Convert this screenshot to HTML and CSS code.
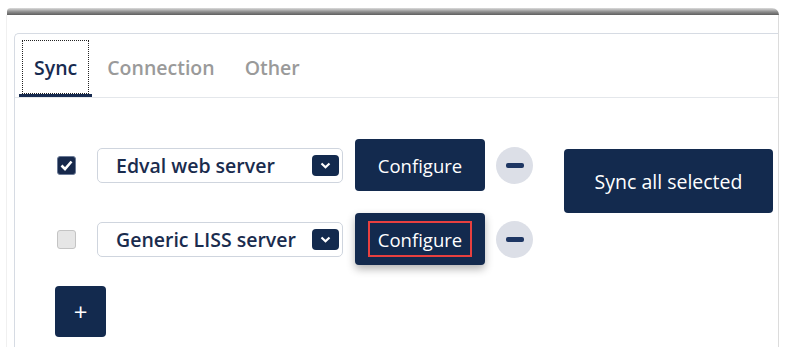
FILE: index.html
```html
<!DOCTYPE html>
<html lang="en">
<head>
<meta charset="UTF-8">
<meta name="viewport" content="width=device-width, initial-scale=1.0">
<title>Sync settings</title>
<link rel="stylesheet" href="styles.css">
</head>
<body>
  <div class="window">
    <div class="window-shadow"></div>
    <div class="window-body">
      <div class="panel">
        <div class="tabs">
          <a class="tab active"><span>Sync</span></a>
          <a class="tab"><span>Connection</span></a>
          <a class="tab"><span>Other</span></a>
        </div>

        <div class="panel-content">
          <div class="sync-area">
            <div class="rows">
              <div class="row">
                <span class="check checked">
                  <svg width="13" height="11" viewBox="0 0 13 11"><path d="M1.5 5.5 L5 9 L11.5 1.5" fill="none" stroke="#fff" stroke-width="2.6"/></svg>
                </span>
                <div class="select">
                  <span class="select-text">Edval web server</span>
                  <span class="select-arrow">
                    <svg width="11" height="7" viewBox="0 0 11 7"><path d="M1.5 1.5 L5.5 5.2 L9.5 1.5" fill="none" stroke="#fff" stroke-width="2.2"/></svg>
                  </span>
                </div>
                <button class="btn configure">Configure</button>
                <span class="remove"><span class="remove-bar"></span></span>
              </div>

              <div class="row">
                <span class="check"></span>
                <div class="select">
                  <span class="select-text">Generic LISS server</span>
                  <span class="select-arrow">
                    <svg width="11" height="7" viewBox="0 0 11 7"><path d="M1.5 1.5 L5.5 5.2 L9.5 1.5" fill="none" stroke="#fff" stroke-width="2.2"/></svg>
                  </span>
                </div>
                <button class="btn configure hover"><span class="highlight">Configure</span></button>
                <span class="remove"><span class="remove-bar"></span></span>
              </div>
            </div>

            <button class="btn sync-all">Sync all selected</button>
          </div>

          <button class="btn add">+</button>
        </div>
      </div>
    </div>
  </div>
</body>
</html>
```

FILE: styles.css
```css
body {
    font-family: "Open Sans", "Noto Sans", sans-serif;
    margin: 0;
    padding: 0;
    background: #fff;
    height: 347px;
    overflow: hidden;
  }
  .window {
    margin: 8px 7px 0 6px;
  }
  .window-shadow {
    height: 7px;
    margin: 0 0 0 1px;
    border-radius: 4px 8px 0 0;
    background: linear-gradient(to bottom, #dcdcdc, #8c8c8c 55%, #5e5e5e);
  }
  .window-body {
    height: 314px;
    border-left: 1px solid #f0f0f0;
    border-right: 1px solid #dcdcdc;
    padding: 18px 0 0 7px;
  }
  .panel {
    border: 1px solid #d6dbe3;
    border-right: none;
    border-bottom: none;
    border-radius: 5px 0 0 0;
    height: 313px;
  }
  .tabs {
    display: flex;
    padding-left: 4px;
    border-bottom: 1px solid #e4e7eb;
    height: 63px;
  }
  .tab {
    padding: 6px 3px 0;
    border-bottom: 3px solid transparent;
    color: #9a9a9a;
    font-size: 19.5px;
    font-weight: 600;
    cursor: pointer;
  }
  .tab span {
    display: block;
    height: 52px;
    line-height: 54px;
    padding: 0 11px;
    border: 1px dotted transparent;
  }
  .tab.active {
    color: #172b50;
    border-bottom-color: #172b50;
  }
  .tab.active span {
    border-color: #222;
  }
  .panel-content {
    padding: 41px 0 0 40px;
  }
  .sync-area {
    display: flex;
    align-items: flex-start;
    gap: 31px;
  }
  .rows {
    display: flex;
    flex-direction: column;
    gap: 22px;
  }
  .row {
    display: flex;
    align-items: center;
    height: 52px;
  }
  .check {
    width: 17px;
    height: 17px;
    margin: 0 21px 0 2px;
    border: 1px solid #c4c4c4;
    border-radius: 3px;
    background: #e6e6e6;
    display: flex;
    align-items: center;
    justify-content: center;
  }
  .check.checked {
    background: #17294c;
    border-color: #6b7a96;
  }
  .select {
    width: 223px;
    height: 33px;
    border: 1px solid #cfd5de;
    border-radius: 5px;
    display: flex;
    align-items: center;
    justify-content: space-between;
    padding: 0 3px 0 18px;
    margin-right: 12px;
  }
  .select-text {
    font-size: 19.5px;
    font-weight: 600;
    color: #1a2c4e;
    white-space: nowrap;
  }
  .select-arrow {
    width: 27px;
    height: 21px;
    border-radius: 4px;
    background: #132a4e;
    display: flex;
    align-items: center;
    justify-content: center;
  }
  .btn {
    font-family: inherit;
    background: #132a4e;
    color: #fff;
    border: none;
    border-radius: 4px;
    cursor: pointer;
    padding: 0;
  }
  .configure {
    width: 130px;
    height: 52px;
    font-size: 18.5px;
    margin-right: 11px;
  }
  .configure.hover {
    box-shadow: 0 4px 8px rgba(0, 0, 0, 0.3);
  }
  .highlight {
    display: inline-block;
    border: 2px solid #e8403f;
    padding: 4px 8px 3px;
    line-height: 25px;
  }
  .remove {
    width: 37px;
    height: 37px;
    border-radius: 50%;
    background: #dcdfe7;
    display: flex;
    align-items: center;
    justify-content: center;
  }
  .remove-bar {
    width: 18px;
    height: 5px;
    border-radius: 2px;
    background: #1e3663;
  }
  .sync-all {
    width: 209px;
    height: 64px;
    margin-top: 10px;
    font-size: 19.5px;
  }
  .add {
    width: 51px;
    height: 51px;
    margin: 21px 0 0 0;
    font-size: 24px;
    line-height: 1;
  }
```
